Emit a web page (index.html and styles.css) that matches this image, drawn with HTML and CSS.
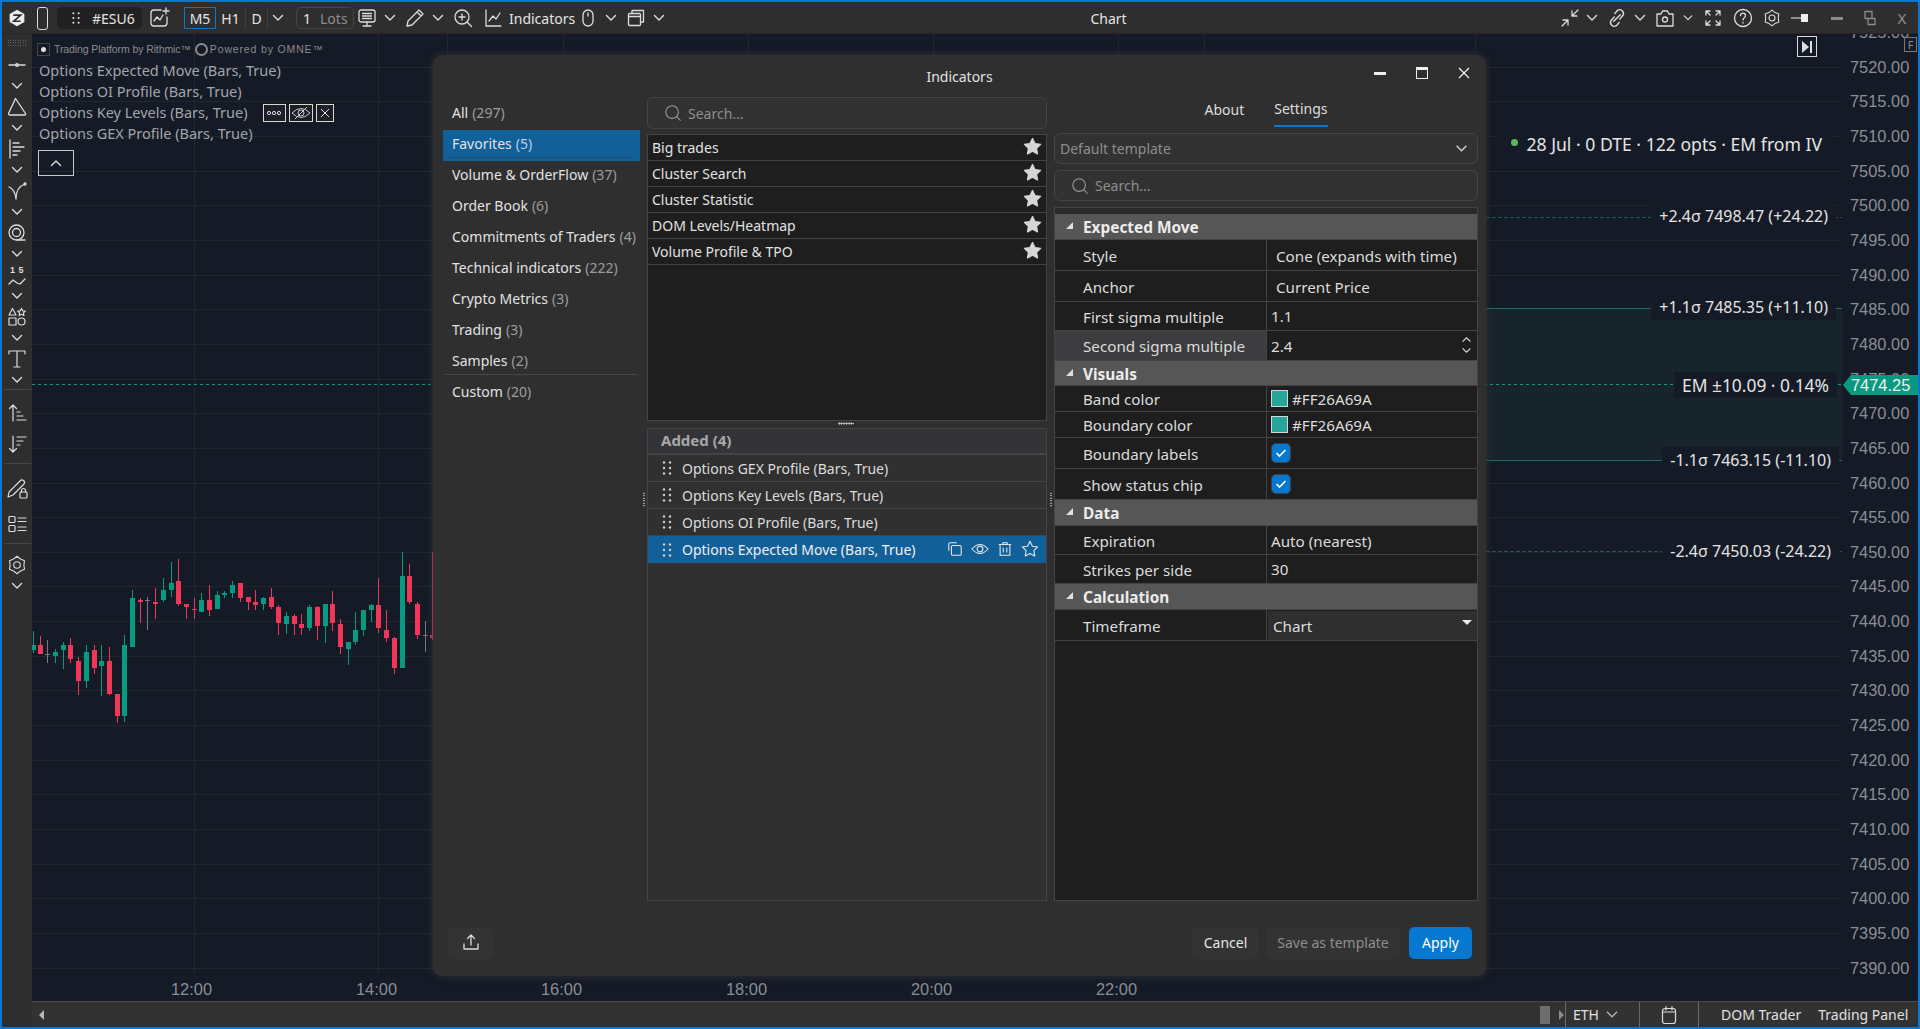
FILE: index.html
```html
<!DOCTYPE html>
<html lang="en">
<head>
<meta charset="utf-8">
<title>Chart</title>
<link rel="stylesheet" href="styles.css">
</head>
<body>
<svg class="defs" width="0" height="0" aria-hidden="true">
  <symbol id="chev" viewBox="0 0 12 8"><path d="M1.5 1.5 6 6l4.5-4.5"/></symbol>
  <symbol id="gear" viewBox="0 0 24 24"><polygon points="12,2.5 15.75,5.5 20.2,7.25 19.5,12 20.2,16.75 15.75,18.5 12,21.5 8.25,18.5 3.8,16.75 4.5,12 3.8,7.25 8.25,5.5"/><circle cx="12" cy="12" r="3.6"/></symbol>
  <symbol id="search" viewBox="0 0 20 20"><circle cx="9" cy="9" r="7"/><path d="M14 14l4.5 4.5"/></symbol>
  <symbol id="star" viewBox="0 0 20 20"><polygon points="10,1.500 12.650,6.860 18.560,7.720 14.280,11.890 15.290,17.780 10,15 4.710,17.780 5.720,11.890 1.440,7.720 7.350,6.860"/></symbol>
  <symbol id="drag" viewBox="0 0 10 16"><circle cx="2" cy="2.500" r="1.200"/><circle cx="8" cy="2.500" r="1.200"/><circle cx="2" cy="8" r="1.200"/><circle cx="8" cy="8" r="1.200"/><circle cx="2" cy="13.500" r="1.200"/><circle cx="8" cy="13.500" r="1.200"/></symbol>
</svg>
<div class="app">
  <header class="topbar">
    <div class="s w18 ml6"><svg class="ico22 fillw" viewBox="0 0 22 22"><path d="M11 1 20 6v10l-9 5-9-5V6z"/><path class="zmark" d="M6.500 7.500h9L7 15h8.500"/></svg></div>
    <div class="phone"></div>
    <div class="symchip"><svg class="drag12" viewBox="0 0 10 16"><use href="#drag"/></svg><span>#ESU6</span></div>
    <div class="s w22 ml6"><svg class="ico22 st" viewBox="0 0 22 22"><path d="M13 3H6a3 3 0 0 0-3 3v10a3 3 0 0 0 3 3h10a3 3 0 0 0 3-3v-6"/><path d="M6 14l3-4 3 3 3-5"/><path d="M18 1v6M15 4h6"/></svg></div>
    <div class="tf tf-on">M5</div>
    <div class="tf w30 bordr">H1</div>
    <div class="tf w22 bordr">D</div>
    <div class="s w20"><svg class="chev"><use href="#chev"/></svg></div>
    <div class="lots"><span>1</span><span class="dim">Lots</span></div>
    <div class="s w24 ml1"><svg class="ico20 st" viewBox="0 0 20 20"><rect x="2" y="2" width="16" height="12" rx="2"/><path d="M5.500 5.500h9M5.500 8h9M5.500 10.500h9M10 14v4M6 18h8"/></svg></div>
    <div class="s w22"><svg class="chev"><use href="#chev"/></svg></div>
    <div class="s w28"><svg class="ico20 st" viewBox="0 0 20 20"><path d="M2 18l1-5L14 2l4 4L7 17zM12 4l4 4"/></svg></div>
    <div class="s w18"><svg class="chev"><use href="#chev"/></svg></div>
    <div class="s w32"><svg class="ico20 st" viewBox="0 0 20 20"><circle cx="9" cy="9" r="7"/><path d="M14 14l4.500 4.500M6 9h6M9 6v6"/></svg></div>
    <div class="s w28"><svg class="ico20 st" viewBox="0 0 20 20"><path d="M3 2v16h15M6 13l4-5 3 3 4-6"/></svg></div>
    <div class="tbtext ml2">Indicators</div>
    <div class="s w26"><svg class="ico20 st" viewBox="0 0 20 20"><rect x="5" y="2" width="10" height="16" rx="5"/><path d="M10 5v3"/></svg></div>
    <div class="s w20"><svg class="chev"><use href="#chev"/></svg></div>
    <div class="s w30"><svg class="ico20 st" viewBox="0 0 20 20"><rect x="2.500" y="5.500" width="12" height="12" rx="1"/><path d="M2.500 8.500h12M6 5.500V2.500h11.500V14h-3"/></svg></div>
    <div class="s w16"><svg class="chev"><use href="#chev"/></svg></div>
    <div class="tbtitle">Chart</div>
    <div class="s w28"><svg class="ico20 st" viewBox="0 0 20 20"><path d="M2 18l6-6M3 12h5v5M18 2l-6 6M12 3v5h5"/></svg></div>
    <div class="s w16"><svg class="chev"><use href="#chev"/></svg></div>
    <div class="s w33"><svg class="ico22 st" viewBox="0 0 20 20"><path d="M8 6l2.500-3a3.500 3.500 0 0 1 5 4.500l-3 3.500M12 14l-2.500 3a3.500 3.500 0 0 1-5-4.500l3-3.500M7 13l6-6"/></svg></div>
    <div class="s w14"><svg class="chev"><use href="#chev"/></svg></div>
    <div class="s w36"><svg class="ico20 st" viewBox="0 0 20 20"><path d="M2 6h4l1.500-3h5L14 6h4v12H2z"/><circle cx="10" cy="11.500" r="2.500"/></svg></div>
    <div class="s w10"><svg class="chev"><use href="#chev"/></svg></div>
    <div class="s w40"><svg class="ico20 st" viewBox="0 0 20 20"><path d="M3 7V3h4M13 3h4v4M17 13v4h-4M7 17H3v-4M3 3l4 4M17 3l-4 4M17 17l-4-4M3 17l4-4"/></svg></div>
    <div class="s w20"><svg class="ico20 st" viewBox="0 0 20 20"><circle cx="10" cy="10" r="8.500"/><path d="M7.500 7.500a2.500 2.500 0 1 1 3.800 2.200c-.9.600-1.300 1.100-1.300 2.300M10 14.500v.5"/></svg></div>
    <div class="s w38"><svg class="ico20 st" viewBox="0 0 24 24"><use href="#gear"/></svg></div>
    <div class="s w20"><svg class="ico20 fillw" viewBox="0 0 20 20"><path d="M0 9.500h10V6h7v8h-7v-3.500H0z"/></svg></div>
    <div class="wbtn ml14"><i class="w-min"></i></div>
    <div class="wbtn ml9"><svg class="ico20 st dimst" viewBox="0 0 20 20"><path d="M5 3.500h7v7H5zM8 10.500h7v6H8z"/></svg></div>
    <div class="wbtn ml8 wx">X</div>
  </header>

  <div class="main">
    <nav class="lefttool">
      <div class="grip"></div>
      <div class="tool first"><svg class="ico20 st" viewBox="0 0 20 20"><path d="M2 10h16"/><circle cx="10" cy="10" r="1.300"/></svg><svg class="chev"><use href="#chev"/></svg></div>
      <div class="tool"><svg class="ico22 st" viewBox="0 0 22 22"><path d="M9.500 2.500 19.500 17.500q.5 1.500-1 1.500H4q-1.500 0-1.500-1.500z"/></svg><svg class="chev"><use href="#chev"/></svg></div>
      <div class="tool"><svg class="ico20 st" viewBox="0 0 20 20"><path d="M3 1v18M6 4h6M6 8h11M6 12h7M6 16h4"/></svg><svg class="chev"><use href="#chev"/></svg></div>
      <div class="tool"><svg class="ico20 st" viewBox="0 0 20 20"><path d="M2 6c3 1 6 4 7 12M9 18c0-7 3-13 9-15"/><circle cx="18" cy="3" r="1"/></svg><svg class="chev"><use href="#chev"/></svg></div>
      <div class="tool"><svg class="ico20 st" viewBox="0 0 20 20"><circle cx="9.500" cy="9.500" r="7.500"/><circle cx="9.500" cy="9.500" r="4"/><path d="M10 17h8"/></svg><svg class="chev"><use href="#chev"/></svg></div>
      <div class="tool"><span class="waveno">1 5</span><svg class="wave st" viewBox="0 0 20 10"><path d="M2 8l4-4 4 3 3 1 5-5"/></svg><svg class="chev"><use href="#chev"/></svg></div>
      <div class="tool"><svg class="ico20 st thin" viewBox="0 0 20 20"><path d="M5.500 1.500 9 8H2zM2 11h7v7H2zM14.500 1.500l1.200 2.300 2.600.3-1.900 1.800.5 2.600-2.400-1.200-2.400 1.200.5-2.600-1.900-1.800 2.600-.3z"/><circle cx="14.500" cy="14.500" r="3.500"/></svg><svg class="chev"><use href="#chev"/></svg></div>
      <div class="tool"><svg class="ico20 st thin" viewBox="0 0 20 20"><path d="M2 5V2h16v3M10 2v16M7 18h6"/></svg><svg class="chev"><use href="#chev"/></svg></div>
      <div class="tsep"></div>
      <div class="tslot after7"><svg class="ico20 st thin" viewBox="0 0 20 20"><path d="M6 18V2M2.500 5.500 6 2l3.500 3.500M10 9h3M10 13h6M10 17h9"/></svg></div>
      <div class="tslot"><svg class="ico20 st thin" viewBox="0 0 20 20"><path d="M6 2v16M2.500 14.500 6 18l3.500-3.500M10 3h9M10 7h6M10 11h3"/></svg></div>
      <div class="tsep mt4"></div>
      <div class="tslot2 after7"><svg class="ico22 st thin" viewBox="0 0 22 22"><path d="M2 19l1-5L14 3a2.500 2.500 0 0 1 4 3L7 17z"/><rect x="14" y="14" width="7" height="6" rx="1"/><path d="M15.500 14v-1.500a2 2 0 0 1 4 0V14"/></svg></div>
      <div class="tslot2"><svg class="ico20 st thin" viewBox="0 0 20 20"><rect x="2" y="2.500" width="6" height="6" rx="1"/><rect x="2" y="11.500" width="6" height="6" rx="1"/><path d="M11 4h8M11 7.500h8M11 13h8M11 16.500h8"/></svg></div>
      <div class="tsep mt2"></div>
      <div class="tool gearslot"><svg class="ico22 st thin" viewBox="0 0 24 24"><use href="#gear"/></svg><svg class="chev"><use href="#chev"/></svg></div>
    </nav>

    <div class="centercol">
      <section class="chart">
        <svg class="canvas" viewBox="32 34 1886 967" width="1886" height="967">
          <path class="grid" d="M32 67H1842M32 101H1842M32 136H1842M32 171H1842M32 205H1842M32 240H1842M32 275H1842M32 309H1842M32 344H1842M32 379H1842M32 413H1842M32 448H1842M32 483H1842M32 517H1842M32 552H1842M32 586H1842M32 621H1842M32 656H1842M32 690H1842M32 725H1842M32 760H1842M32 794H1842M32 829H1842M32 864H1842M32 898H1842M32 933H1842M32 968H1842M194 34V974M378 34V974M447 34V974M563 34V974M748 34V974M933 34V974M1118 34V974M1204 34V974M1475 34V974"/>
          <rect class="band" x="1000" y="308" width="842" height="152"/>
          <path class="lvl-dash" d="M1000 217H1842M1000 551H1842"/>
          <path class="lvl-solid" d="M1000 308H1842M1000 460H1842"/>
          <path class="now" d="M32 384H1842"/>
          <g transform="translate(0 530) scale(.33333)">
            <path class="wick gr" d="M101 304V368M166 358V398M190 337V416M259 346V473M304 346V497M373 316V575M397 181V351M490 145V217M514 97V202M604 190V246M652 184V237M673 184V205M697 154V205M790 202V241M859 247V311M928 226V304M976 222V340M1045 336V404M1066 247V346M1090 240V319M1114 223V275M1207 67V414"/>
            <path class="wick rd" d="M121 319V372M211 325V398M235 382V496M283 346V431M328 352V496M352 492V580M421 205V280M466 175V268M535 88V228M559 222V268M583 205V268M628 166V259M721 159V217M745 201V241M766 181V241M814 175V238M835 225V316M883 253V316M904 253V316M952 229V331M997 184V304M1021 268V373M1135 145V310M1159 241V337M1183 320V431M1228 103V223M1252 217V326M1297 67V331"/>
            <path class="wick gy" d="M142 331V398M442 202V301M1276 274V367"/>
            <path class="body gr" d="M102 345V360M166 366V378M190 345V360M259 366V453M304 393V408M373 345V558M397 204V351M490 180V210M514 159V180M604 210V246M652 195V237M673 189V195M697 165V189M790 204V222M859 258V282M928 231V294M976 222V288M1045 336V357M1066 300V336M1090 240V300M1114 225V240M1207 138V414"/>
            <path class="body rd" d="M121 345V372M211 345V387M235 393V453M283 360V414M328 393V492M352 492V558M421 210V216M466 216V222M535 153V222M559 222V231M583 238V240M628 210V240M721 159V204M745 201V216M766 216V225M814 201V231M835 231V279M883 258V282M904 282V294M952 231V288M997 222V279M1021 282V351M1135 225V294M1159 300V324M1183 324V414M1228 138V216M1252 222V315M1297 315V324"/>
            <path class="body gy" d="M142 373V375M442 211V213M1276 315V317"/>
          </g>
          <g class="axis">
            <text x="1850" y="38">7525.00</text><text x="1850" y="73">7520.00</text><text x="1850" y="107">7515.00</text><text x="1850" y="142">7510.00</text><text x="1850" y="177">7505.00</text><text x="1850" y="211">7500.00</text><text x="1850" y="246">7495.00</text><text x="1850" y="281">7490.00</text><text x="1850" y="315">7485.00</text><text x="1850" y="350">7480.00</text><text x="1850" y="385">7475.00</text><text x="1850" y="419">7470.00</text><text x="1850" y="454">7465.00</text><text x="1850" y="489">7460.00</text><text x="1850" y="523">7455.00</text><text x="1850" y="558">7450.00</text><text x="1850" y="592">7445.00</text><text x="1850" y="627">7440.00</text><text x="1850" y="662">7435.00</text><text x="1850" y="696">7430.00</text><text x="1850" y="731">7425.00</text><text x="1850" y="766">7420.00</text><text x="1850" y="800">7415.00</text><text x="1850" y="835">7410.00</text><text x="1850" y="870">7405.00</text><text x="1850" y="904">7400.00</text><text x="1850" y="939">7395.00</text><text x="1850" y="974">7390.00</text>
            <text x="171" y="995">12:00</text><text x="356" y="995">14:00</text><text x="541" y="995">16:00</text><text x="726" y="995">18:00</text><text x="911" y="995">20:00</text><text x="1096" y="995">22:00</text>
          </g>
          <polygon class="tag" points="1843,385 1851,375 1918,375 1918,395 1851,395"/>
          <text class="tagtext" x="1851" y="391">7474.25</text>
        </svg>

        <div class="legend">
          <div class="brand"><span class="brandbox"></span><span>Trading Platform by Rithmic™</span><i class="ring"></i><span class="wide">Powered by OMNE™</span></div>
          <div class="lg">Options Expected Move (Bars, True)</div>
          <div class="lg">Options OI Profile (Bars, True)</div>
          <div class="lg">Options Key Levels (Bars, True)
            <span class="lgbtns">
              <span class="lgbtn"><svg viewBox="0 0 16 10" class="lgi"><circle cx="3" cy="5" r="1.600"/><circle cx="8" cy="5" r="1.600"/><circle cx="13" cy="5" r="1.600"/></svg></span>
              <span class="lgbtn w24b"><svg viewBox="0 0 20 14" class="lgeye"><path d="M1 7q9-9 18 0q-9 9-18 0z"/><circle cx="10" cy="7" r="3"/><path d="M4 13 16 1"/></svg></span>
              <span class="lgbtn w18b"><svg viewBox="0 0 10 10" class="lgx"><path d="M1 1l8 8M9 1l-8 8"/></svg></span>
            </span>
          </div>
          <div class="lg">Options GEX Profile (Bars, True)</div>
          <div class="collapse"><svg class="chev"><use href="#chev"/></svg></div>
        </div>

        <div class="jump"><svg viewBox="0 0 12 14" class="jumpi"><path d="M1 1l7 6-7 6z"/><path d="M9 1h2v12H9z"/></svg></div>
        <div class="fbox">F</div>

        <div class="chip status"><i class="dot"></i>28 Jul · 0 DTE · 122 opts · EM from IV</div>
        <div class="chip lv l1">+2.4σ 7498.47 (+24.22)</div>
        <div class="chip lv l2">+1.1σ 7485.35 (+11.10)</div>
        <div class="chip l3">EM ±10.09 · 0.14%</div>
        <div class="chip lv l4">-1.1σ 7463.15 (-11.10)</div>
        <div class="chip lv l5">-2.4σ 7450.03 (-24.22)</div>
      </section>

      <footer class="bottombar">
        <span class="tri-left"></span>
        <span class="thumb"></span>
        <span class="tri-right"></span>
        <div class="bb bb-eth">ETH <svg class="chev2"><use href="#chev"/></svg></div>
        <div class="bb bb-cal"><svg class="ico20 st thin" viewBox="0 0 20 20"><rect x="3.500" y="3.500" width="13" height="15" rx="2.500"/><path d="M3.500 7h13M7 1.500v3.500M13 1.500v3.500"/></svg></div>
        <div class="bb bb-dom"><span>DOM Trader</span><span>Trading Panel</span></div>
      </footer>
    </div>
  </div>

  <div class="dialog" role="dialog">
    <div class="dlg-head">
      <div class="dlg-title">Indicators</div>
      <div class="dlg-ctrls">
        <i class="c-min"></i><i class="c-max"></i><svg class="c-x" viewBox="0 0 12 12"><path d="M1 1l10 10M11 1 1 11"/></svg>
      </div>
    </div>
    <div class="dlg-body">
      <aside class="cats">
        <div class="cat">All <em>(297)</em></div>
        <div class="cat on">Favorites <em>(5)</em></div>
        <div class="cat">Volume &amp; OrderFlow <em>(37)</em></div>
        <div class="cat">Order Book <em>(6)</em></div>
        <div class="cat">Commitments of Traders <em>(4)</em></div>
        <div class="cat">Technical indicators <em>(222)</em></div>
        <div class="cat">Crypto Metrics <em>(3)</em></div>
        <div class="cat">Trading <em>(3)</em></div>
        <div class="cat sepd">Samples <em>(2)</em></div>
        <div class="cat">Custom <em>(20)</em></div>
      </aside>

      <div class="midcol">
        <div class="field search"><svg class="sico"><use href="#search"/></svg><span>Search...</span></div>
        <div class="favlist">
          <div class="fav"><span>Big trades</span><svg class="fstar"><use href="#star"/></svg></div>
          <div class="fav"><span>Cluster Search</span><svg class="fstar"><use href="#star"/></svg></div>
          <div class="fav"><span>Cluster Statistic</span><svg class="fstar"><use href="#star"/></svg></div>
          <div class="fav"><span>DOM Levels/Heatmap</span><svg class="fstar"><use href="#star"/></svg></div>
          <div class="fav"><span>Volume Profile &amp; TPO</span><svg class="fstar"><use href="#star"/></svg></div>
        </div>
        <div class="hsplit"></div>
        <div class="added">
          <div class="addhead">Added (4)</div>
          <div class="add"><svg class="dragi"><use href="#drag"/></svg><span>Options GEX Profile (Bars, True)</span></div>
          <div class="add"><svg class="dragi"><use href="#drag"/></svg><span>Options Key Levels (Bars, True)</span></div>
          <div class="add"><svg class="dragi"><use href="#drag"/></svg><span>Options OI Profile (Bars, True)</span></div>
          <div class="add sel"><svg class="dragi"><use href="#drag"/></svg><span>Options Expected Move (Bars, True)</span>
            <div class="acts">
              <svg class="act" viewBox="0 0 18 18"><path d="M2 11V3.500A1.500 1.500 0 0 1 3.500 2H11"/><rect x="5" y="5" width="11" height="11" rx="1.500"/></svg>
              <svg class="act act-eye" viewBox="0 0 20 18"><path d="M1 9q9-10 18 0q-9 10-18 0z"/><circle cx="10" cy="9" r="3.200"/></svg>
              <svg class="act" viewBox="0 0 18 18"><path d="M2 4h14M6.500 4V2h5v2M3.500 4v12h11V4M7 7.500v5.500M11 7.500v5.500"/></svg>
              <svg class="act act-star" viewBox="0 0 20 20"><use href="#star"/></svg>
            </div>
          </div>
        </div>
      </div>

      <div class="rightcol">
        <div class="tabs"><span class="tab">About</span><span class="tab tab-on">Settings</span></div>
        <div class="field tmpl"><span>Default template</span><svg class="chev3"><use href="#chev"/></svg></div>
        <div class="field search s2"><svg class="sico"><use href="#search"/></svg><span>Search...</span></div>
        <div class="props">
          <div class="strip"></div>
          <div class="ghead h26"><i class="caret"></i>Expected Move</div>
          <div class="prow h31"><div class="pk">Style</div><div class="pv pv9">Cone (expands with time)</div></div>
          <div class="prow h31"><div class="pk">Anchor</div><div class="pv pv9">Current Price</div></div>
          <div class="prow h29"><div class="pk">First sigma multiple</div><div class="pv">1.1</div></div>
          <div class="prow h30"><div class="pk hot">Second sigma multiple</div><div class="pv">2.4<span class="spin"><svg class="chev4 up"><use href="#chev"/></svg><svg class="chev4"><use href="#chev"/></svg></span></div></div>
          <div class="ghead h25"><i class="caret"></i>Visuals</div>
          <div class="prow h26"><div class="pk">Band color</div><div class="pv"><i class="swatch"></i>#FF26A69A</div></div>
          <div class="prow h26"><div class="pk">Boundary color</div><div class="pv"><i class="swatch"></i>#FF26A69A</div></div>
          <div class="prow h31"><div class="pk">Boundary labels</div><div class="pv"><span class="check"><svg viewBox="0 0 12 10"><path d="M1.500 5l3 3 6-6"/></svg></span></div></div>
          <div class="prow h31"><div class="pk">Show status chip</div><div class="pv"><span class="check"><svg viewBox="0 0 12 10"><path d="M1.500 5l3 3 6-6"/></svg></span></div></div>
          <div class="ghead h26"><i class="caret"></i>Data</div>
          <div class="prow h29"><div class="pk">Expiration</div><div class="pv pt1">Auto (nearest)</div></div>
          <div class="prow h29"><div class="pk">Strikes per side</div><div class="pv">30</div></div>
          <div class="ghead h26"><i class="caret"></i>Calculation</div>
          <div class="prow h31"><div class="pk">Timeframe</div><div class="pv pvsel"><span>Chart</span><i class="drop"></i></div></div>
        </div>
      </div>
      <span class="vgrip g1"></span>
      <span class="vgrip g2"></span>
    </div>
    <div class="dlg-foot">
      <button class="btn upl"><svg class="ico18 st" viewBox="0 0 18 18"><path d="M9 12V2M5.500 5.500 9 2l3.500 3.500M2 11v5h14v-5"/></svg></button>
      <div class="rbtns">
        <button class="btn cancel">Cancel</button>
        <button class="btn save">Save as template</button>
        <button class="btn apply">Apply</button>
      </div>
    </div>
  </div>
</div>
</body>
</html>
```
FILE: styles.css
```css
* { box-sizing: border-box; }
html, body { margin: 0; padding: 0; }
body { background: #141a26; color: #e2e2e2; font-family: "Noto Sans", "Open Sans", sans-serif; font-size: 14px; overflow: hidden; }
.defs { position: absolute; }

.app { position: relative; width: 1920px; height: 1029px; border: 2px solid #0a78d0; display: flex; flex-direction: column; background: #141a26; }

/* generic icons */
.st { fill: none; stroke: #dcdcdc; stroke-width: 1.3; stroke-linecap: round; stroke-linejoin: round; }
.st.thin { stroke-width: 1.2; }
.dimst { stroke: #8a8a8a; }
.fillw { fill: #ededed; }
.zmark { fill: none; stroke: #2e2e2e; stroke-width: 2; }
.ico18 { width: 18px; height: 18px; }
.ico20 { width: 20px; height: 20px; }
.ico22 { width: 22px; height: 22px; }
.chev { width: 12px; height: 8px; fill: none; stroke: #dcdcdc; stroke-width: 1.4; stroke-linecap: round; stroke-linejoin: round; }
.chev2 { width: 14px; height: 9px; fill: none; stroke: #b5b5b5; stroke-width: 1.1; margin-left: 6px; }
.chev3 { width: 13px; height: 9px; fill: none; stroke: #cfcfcf; stroke-width: 1.300; }
.chev4 { display: block; width: 11px; height: 7px; fill: none; stroke: #dcdcdc; stroke-width: 1.300; }
.chev4.up { transform: scaleY(-1); margin-bottom: 4px; }

/* top bar */
.topbar { height: 32px; flex: none; background: #2e2e2f; display: flex; align-items: center; color: #e4e4e4; border-bottom: 1px solid #262626; padding-top: 1px; }
.s { display: flex; align-items: center; justify-content: center; height: 30px; flex: none; }
.w10 { width: 10px; } .w14 { width: 14px; } .w16 { width: 16px; } .w18 { width: 18px; } .w20 { width: 20px; }
.w22 { width: 22px; } .w24 { width: 24px; } .w26 { width: 26px; } .w28 { width: 28px; } .w30 { width: 30px; }
.w32 { width: 32px; } .w33 { width: 33px; } .w36 { width: 36px; } .w38 { width: 38px; } .w40 { width: 40px; }
.ml1 { margin-left: 1px; } .ml2 { margin-left: 2px; } .ml6 { margin-left: 6px; } .ml8 { margin-left: 8px; } .ml9 { margin-left: 9px; } .ml14 { margin-left: 14px; }
.phone { width: 11px; height: 23px; border: 1.3px solid #dcdcdc; border-radius: 3px; margin-left: 11px; flex: none; }
.symchip { width: 85px; height: 22px; margin-left: 9px; background: #212121; border-radius: 5px; display: flex; align-items: center; padding-left: 14px; flex: none; font-size: 14px; }
.drag12 { width: 10px; height: 14px; fill: #dcdcdc; margin-right: 11px; }
.tf { height: 22px; display: flex; align-items: center; justify-content: center; flex: none; font-size: 14px; }
.tf-on { width: 32px; margin-left: 14px; border: 1px solid #0a78d0; }
.bordr { border-right: 1px solid #3f3f3f; }
.lots { width: 58px; height: 22px; margin-left: 8px; border: 1px solid #454545; border-radius: 5px; display: flex; align-items: center; gap: 9px; padding-left: 6px; flex: none; }
.dim { color: #8d8d8d; }
.tbtext { flex: none; font-size: 14px; width: 66px; }
.tbtitle { flex: 1; text-align: center; font-size: 14px; padding-right: 6px; }
.wbtn { width: 24px; height: 30px; display: flex; align-items: center; justify-content: center; flex: none; color: #8f8f8f; }
.w-min { width: 12px; height: 3px; background: #8a8a8a; }
.wx { font-size: 15px; margin-right: 4px; }

/* main */
.main { flex: 1; display: flex; min-height: 0; }
.lefttool { width: 30px; flex: none; background: #2e2e2f; display: flex; flex-direction: column; align-items: center; }
.grip { height: 8px; width: 20px; margin-top: 5px; margin-bottom: 6px; background-image: radial-gradient(#8f8f8f .7px, transparent .8px); background-size: 2.500px 2.500px; }
.tool { height: 42px; width: 30px; flex: none; display: flex; flex-direction: column; align-items: center; position: relative; }
.tool > svg:first-child, .tool > .wave { height: 24px; }
.tool .chev { margin-top: 5px; }
.tool.first { margin-top: 0; }
.waveno { height: 10px; font-size: 9px; line-height: 10px; font-weight: 600; letter-spacing: .5px; color: #dcdcdc; margin-top: 2px; font-family: "Liberation Sans", sans-serif; }
.tool > .wave { width: 20px; height: 12px; }
.tsep { width: 27px; height: 1px; background: #474747; flex: none; }
.mt4 { margin-top: 4px; } .mt2 { margin-top: 2px; }
.tslot { height: 31px; flex: none; display: flex; align-items: center; justify-content: center; }
.tslot2 { height: 35px; flex: none; display: flex; align-items: center; justify-content: center; }
.after7 { margin-top: 7px; }
.gearslot { margin-top: 9px; }

.centercol { flex: 1; display: flex; flex-direction: column; min-width: 0; }
.chart { position: relative; height: 967px; flex: none; overflow: hidden; background: #141a26; }
.canvas { position: absolute; inset: 0; display: block; }
.grid { stroke: #21262f; stroke-width: 1; fill: none; shape-rendering: crispEdges; }
.band { fill: #18242c; }
.lvl-dash { stroke: #1e5a5a; fill: none; stroke-dasharray: 4 2; shape-rendering: crispEdges; }
.lvl-solid { stroke: #1e6c69; fill: none; shape-rendering: crispEdges; }
.now { stroke: #0b9a82; fill: none; stroke-dasharray: 3 3; shape-rendering: crispEdges; }
.wick { fill: none; stroke-width: 3; shape-rendering: crispEdges; }
.body { fill: none; stroke-width: 15; shape-rendering: crispEdges; }
.gr { stroke: #089981; } .rd { stroke: #f23658; } .gy { stroke: #787b86; }
.axis text { font-family: "Liberation Sans", Arial, sans-serif; font-size: 16.400px; fill: #8b8e95; }
.tag { fill: #089981; }
.tagtext { font-family: "Liberation Sans", Arial, sans-serif; font-size: 16.400px; fill: #f0f0f0; }

.legend { position: absolute; left: 0; top: 0; padding: 7px 0 0 7px; color: #a2a5aa; font-size: 14.500px; }
.brand { display: flex; align-items: center; height: 16px; font-size: 10.500px; color: #8b8b8b; font-family: "Liberation Sans", sans-serif; letter-spacing: -.1px; margin-bottom: 3px; margin-left: -2px; }
.brandbox { width: 13px; height: 13px; border: 1px solid #444; margin-right: 4px; position: relative; }
.brandbox::after { content: ""; position: absolute; left: 3px; top: 3px; width: 5px; height: 5px; background: #e0e0e0; border-radius: 50%; }
.ring { width: 13px; height: 13px; border: 2px solid #8b8b8b; border-radius: 50%; margin: 0 2px 0 4px; }
.wide { letter-spacing: .85px; }
.lg { height: 21px; line-height: 21px; white-space: nowrap; display: flex; align-items: center; }
.lgbtns { display: inline-flex; gap: 3px; margin-left: 15px; }
.lgbtn { width: 23px; height: 18px; border: 1px solid #d8d8c8; display: inline-flex; align-items: center; justify-content: center; background: #1a1f2a; }
.w24b { width: 24px; } .w18b { width: 18px; }
.lgi { width: 16px; height: 10px; fill: none; stroke: #e0e0e0; stroke-width: 1; }
.lgeye { width: 20px; height: 14px; fill: none; stroke: #c8c8c8; stroke-width: 1; }
.lgx { width: 10px; height: 10px; fill: none; stroke: #e4e4e4; stroke-width: 1; }
.collapse { width: 36px; height: 26px; border: 1px solid #c9c9c9; margin: 6px 0 0 -1px; display: flex; align-items: center; justify-content: center; }
.collapse .chev { transform: scaleY(-1); }

.jump { position: absolute; right: 101px; top: 2px; width: 20px; height: 21px; border: 1px solid #d8d8d8; display: flex; align-items: center; justify-content: center; }
.jumpi { width: 12px; height: 14px; fill: #dedede; }
.fbox { position: absolute; right: 1px; top: 3px; width: 13px; height: 15px; border: 1px solid #777; font-size: 11px; line-height: 13px; text-align: center; color: #8a8a8a; }

.chip { position: absolute; height: 26px; display: flex; align-items: center; padding: 0 8px; background: #151b26; color: #e4e4e4; font-size: 17.400px; white-space: nowrap; }
.chip.lv { font-size: 16px; }
.status { right: 88px; top: 97px; padding-left: 14px; font-size: 17.600px; }
.dot { width: 7px; height: 7px; border-radius: 50%; background: #5cb85c; margin-right: 8px; margin-top: -4px; }
.l1 { right: 82px; top: 169px; }
.l2 { right: 82px; top: 260px; }
.l3 { right: 81px; top: 338px; }
.l4 { right: 79px; top: 413px; }
.l5 { right: 79px; top: 504px; }

/* bottom bar */
.bottombar { height: 26px; flex: none; background: #323233; border-top: 1px solid #4a4a4a; display: flex; align-items: center; color: #e0e0e0; font-size: 14px; }
.tri-left { width: 0; height: 0; margin-left: 7px; border-style: solid; border-width: 5px 5px 5px 0; border-color: transparent #b8b8b8 transparent transparent; }
.thumb { width: 10px; height: 18px; background: #6e6e6e; margin-left: auto; }
.tri-right { width: 0; height: 0; margin-left: 9px; border-style: solid; border-width: 5px 0 5px 5px; border-color: transparent transparent transparent #8a8a8a; }
.bb { height: 25px; display: flex; align-items: center; border-left: 1px solid #6a6a6a; flex: none; }
.bb-eth { width: 74px; margin-left: 1px; padding-left: 7px; }
.bb-cal { width: 59px; justify-content: center; }
.bb-dom { width: 220px; padding-left: 22px; gap: 17px; }

/* dialog */
.dialog { position: absolute; left: 431px; top: 53px; width: 1053px; height: 921px; background: #2f2f30; border-radius: 9px; box-shadow: 0 0 7px 1px rgba(52,52,54,.75); display: flex; flex-direction: column; }
.dlg-head { height: 42px; flex: none; position: relative; }
.dlg-title { position: absolute; left: 0; right: 0; top: 12px; text-align: center; font-size: 14px; }
.dlg-ctrls { position: absolute; right: 16px; top: 8px; display: flex; align-items: center; height: 20px; gap: 30px; }
.c-min { width: 12px; height: 3px; background: #f0f0f0; }
.c-max { width: 12px; height: 12px; border: 1.500px solid #f0f0f0; border-top-width: 3px; }
.c-x { width: 12px; height: 12px; fill: none; stroke: #f0f0f0; stroke-width: 1.300; }
.dlg-body { flex: 1; display: flex; position: relative; min-height: 0; padding-left: 10px; }
.cats { width: 197px; flex: none; padding-top: 2px; }
.cat { height: 31px; padding: 0 0 4px 9px; display: flex; align-items: center; gap: 4px; white-space: nowrap; color: #e2e2e2; position: relative; }
.cat em { font-style: normal; color: #9d9d9d; }
.cat.on { background: #12609a; }
.cat.on em { color: #b8cfe0; }
.cat.on::after { content: ""; position: absolute; left: 4px; right: 8px; bottom: 3px; height: 1px; background: #1f4a6b; }
.cat.sepd::after { content: ""; position: absolute; left: 2px; right: 3px; bottom: 3px; height: 1px; background: #484848; }

.midcol { width: 400px; margin-left: 7px; flex: none; display: flex; flex-direction: column; }
.field { height: 32px; border: 1px solid #444; border-radius: 6px; background: #323233; display: flex; align-items: center; color: #8e8e8e; flex: none; }
.search { padding-left: 16px; gap: 6px; }
.sico { width: 18px; height: 18px; fill: none; stroke: #9a9a9a; stroke-width: 1.200; }
.favlist { height: 287px; margin-top: 5px; background: #1e1e1e; border: 1px solid #444; flex: none; }
.fav { height: 26px; border-bottom: 1px solid #444; display: flex; align-items: center; justify-content: space-between; padding: 0 4px 0 4px; color: #e2e2e2; }
.fstar { width: 19px; height: 19px; fill: #d6d6d6; stroke: #d6d6d6; stroke-width: 1.300; stroke-linejoin: round; margin-top: -3px; }
.hsplit { height: 7px; flex: none; position: relative; }
.hsplit::after { content: ""; position: absolute; left: 191px; top: 1px; width: 16px; height: 3px; background-image: radial-gradient(#c8c8c8 .8px, transparent 1px); background-size: 2.500px 2.500px; }
.added { flex: 1; border: 1px solid #444; background: #303031; }
.addhead { height: 26px; background: #343438; border-bottom: 2px solid #444; display: flex; align-items: center; padding: 0 0 2px 13px; font-weight: 700; color: #a8a8a8; font-size: 15px; }
.add { height: 27px; border-bottom: 1px solid #444; display: flex; align-items: center; padding-left: 14px; color: #dcdcdc; position: relative; }
.dragi { width: 10px; height: 16px; fill: #cfcfcf; margin-right: 10px; flex: none; }
.add.sel { background: #12609a; color: #f0f0f0; border-bottom: 0; }
.acts { position: absolute; right: 7px; top: 4px; display: flex; align-items: center; gap: 8px; }
.act { width: 16px; height: 18px; fill: none; stroke: #e8e8e8; stroke-width: 1.200; stroke-linejoin: round; }
.act-eye { width: 18px; }
.act-star { width: 18px; height: 18px; }

.rightcol { width: 424px; margin-left: 7px; flex: none; display: flex; flex-direction: column; }
.tabs { height: 30px; display: flex; justify-content: center; gap: 30px; flex: none; }
.tab { height: 30px; display: flex; align-items: center; padding-bottom: 6px; color: #dcdcdc; }
.tab-on { border-bottom: 2px solid #0a78d0; }
.tmpl { height: 31px; margin-top: 6px; padding: 0 9px 0 5px; justify-content: space-between; }
.s2 { height: 31px; margin-top: 6px; }
.props { flex: 1; margin-top: 6px; border: 1px solid #444; background: #1e1e1e; display: flex; flex-direction: column; font-size: 15.200px; }
.strip { height: 6px; flex: none; background: #2a2a2c; }
.h25 { height: 25px; } .h26 { height: 26px; } .h29 { height: 29px; } .h30 { height: 30px; } .h31 { height: 31px; }
.ghead { flex: none; background: #565656; border-bottom: 1px solid #444; display: flex; align-items: center; padding: 2px 0 0 28px; font-weight: 700; color: #ececec; position: relative; font-size: 15.400px; }
.caret { position: absolute; left: 11px; top: 8px; width: 0; height: 0; border-style: solid; border-width: 0 0 7px 7px; border-color: transparent transparent #e0e0e0 transparent; }
.prow { flex: none; display: flex; border-bottom: 1px solid #444; }
.pk { width: 212px; flex: none; padding: 1px 0 0 28px; display: flex; align-items: center; color: #dcdcdc; border-right: 1px solid #444; white-space: nowrap; }
.hot { background: #3d3d40; }
.pv { flex: 1; display: flex; align-items: center; padding-left: 4px; color: #dcdcdc; position: relative; min-width: 0; white-space: nowrap; }
.pv9 { padding: 1px 0 0 9px; }
.pt1 { padding-top: 1px; }
.spin { position: absolute; right: 5px; top: 5px; }
.swatch { width: 17px; height: 17px; background: #26a69a; border: 1px solid #cfd8d8; margin-right: 4px; }
.check { width: 20px; height: 20px; border-radius: 5px; background: #0678d0; border: 1px solid #39424c; display: flex; align-items: center; justify-content: center; }
.check svg { width: 12px; height: 10px; fill: none; stroke: #fff; stroke-width: 1.600; }
.pvsel { margin: 1px 0 0 1px; background: #2f2f30; padding: 0 5px; justify-content: space-between; }
.drop { width: 0; height: 0; border-style: solid; border-width: 5px 5px 0 5px; border-color: #e8e8e8 transparent transparent transparent; margin-top: -6px; }

.vgrip { position: absolute; top: 395px; width: 2px; height: 16px; background-image: radial-gradient(#c8c8c8 .8px, transparent 1px); background-size: 2.500px 2.500px; }
.g1 { left: 210px; } .g2 { left: 617px; }

.dlg-foot { height: 75px; flex: none; display: flex; justify-content: space-between; align-items: flex-start; padding: 26px 14px 0 15px; }
.rbtns { display: flex; gap: 7px; }
.btn { height: 32px; border: 0; border-radius: 5px; font-family: inherit; font-size: 14px; background: #333334; color: #e6e6e6; padding: 0 0 2px; display: flex; align-items: center; justify-content: center; }
.upl { width: 45px; }
.cancel { width: 67px; }
.save { width: 134px; color: #8e8e8e; margin-right: 2px; }
.apply { width: 63px; background: #0678d0; color: #fff; }
```
